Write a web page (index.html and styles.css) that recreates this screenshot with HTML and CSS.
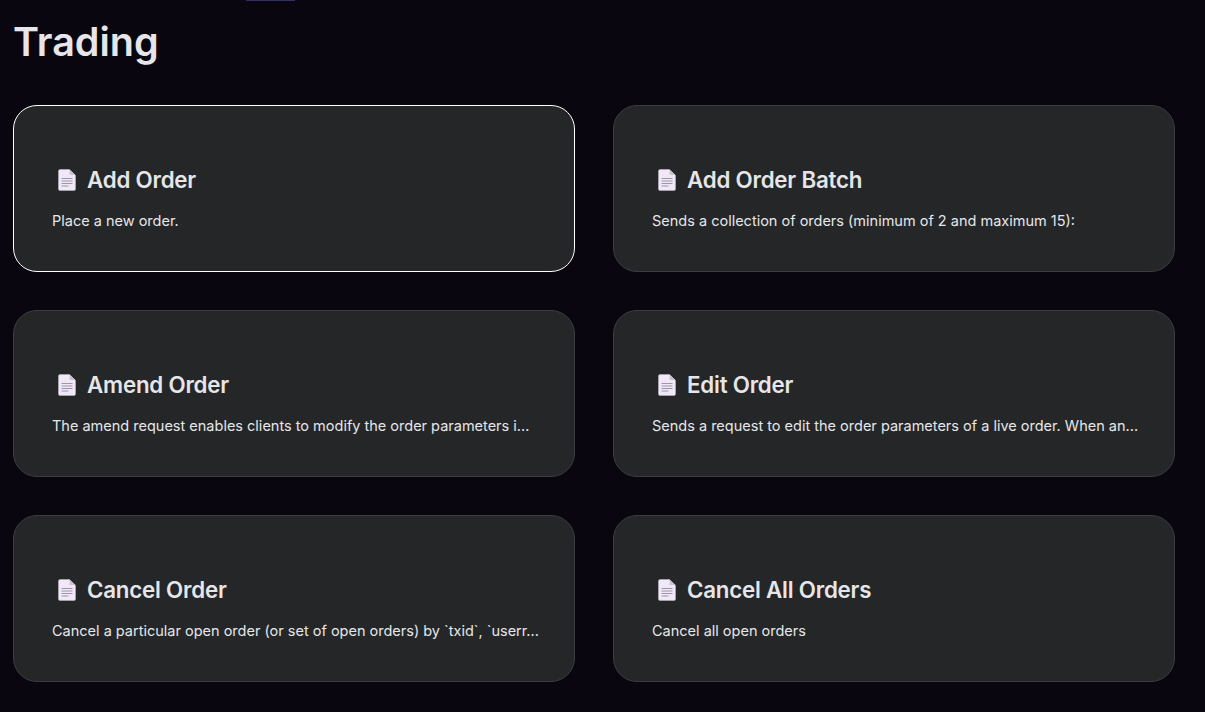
FILE: index.html
```html
<!DOCTYPE html>
<html lang="en">
<head>
<meta charset="utf-8">
<title>Trading</title>
<link rel="stylesheet" href="styles.css">
</head>
<body>
<svg class="sprite" aria-hidden="true">
  <symbol id="doc" viewBox="0 0 18 22">
    <path class="sheet" d="M2 .5h9.500L17.500 6.500V20a1.500 1.500 0 0 1-1.500 1.500H2A1.500 1.500 0 0 1 .5 20V2A1.500 1.500 0 0 1 2 .5z"/>
    <path class="fold" d="M11.500.5v4.500a1 1 0 0 0 1 1h5z"/>
    <path class="lines" d="M3.500 9.500h11M3.500 12h11M3.500 14.500h11M3.500 17h7"/>
  </symbol>
</svg>
<div class="top-pill"></div>
<main class="page">
  <h1 class="heading">Trading</h1>
  <section class="grid">
    <a class="card card-active">
      <h2 class="card-title"><svg class="doc"><use href="#doc"/></svg>Add Order</h2>
      <p class="card-text">Place a new order.</p>
    </a>
    <a class="card">
      <h2 class="card-title"><svg class="doc"><use href="#doc"/></svg>Add Order Batch</h2>
      <p class="card-text">Sends a collection of orders (minimum of 2 and maximum 15):</p>
    </a>
    <a class="card">
      <h2 class="card-title"><svg class="doc"><use href="#doc"/></svg>Amend Order</h2>
      <p class="card-text">The amend request enables clients to modify the order parameters i...</p>
    </a>
    <a class="card">
      <h2 class="card-title"><svg class="doc"><use href="#doc"/></svg>Edit Order</h2>
      <p class="card-text">Sends a request to edit the order parameters of a live order. When an...</p>
    </a>
    <a class="card">
      <h2 class="card-title"><svg class="doc"><use href="#doc"/></svg>Cancel Order</h2>
      <p class="card-text">Cancel a particular open order (or set of open orders) by `txid`, `userr...</p>
    </a>
    <a class="card">
      <h2 class="card-title"><svg class="doc"><use href="#doc"/></svg>Cancel All Orders</h2>
      <p class="card-text">Cancel all open orders</p>
    </a>
  </section>
</main>
</body>
</html>
```
FILE: styles.css
```css
* { box-sizing: border-box; }
html, body { margin: 0; height: 100%; }
body {
  background: #0a0610;
  color: #e6e6ea;
  font-family: Inter, "Liberation Sans", sans-serif;
  overflow: hidden;
}
.sprite { display: none; }
.top-pill {
  position: absolute;
  left: 246px;
  top: 0;
  width: 49px;
  height: 1px;
  background: #2f2f6b;
}
.page { padding: 15px 30px 0 13px; }
.heading {
  margin: 0;
  font-size: 39.5px;
  line-height: 54px;
  font-weight: 600;
  color: #e6e6ea;
}
.grid {
  display: grid;
  grid-template-columns: 562px 562px;
  grid-auto-rows: 167px;
  gap: 38px;
  margin-top: 36px;
}
.card {
  display: block;
  background: #242628;
  border: 1px solid #3b3d42;
  border-radius: 24px;
  padding: 60px 38px 0;
  min-width: 0;
}
.card-active { border-color: #ffffff; }
.card-title {
  display: flex;
  align-items: center;
  margin: 0;
  padding-left: 6px;
  font-size: 22.3px;
  line-height: 28px;
  font-weight: 600;
  letter-spacing: -0.2px;
  color: #e6e6ea;
}
.doc {
  width: 18px;
  height: 22px;
  margin-right: 11px;
  flex: none;
}
.sheet { fill: #f0e8f6; stroke: #b9b3c0; stroke-width: .6; }
.fold { fill: #c9c3d0; }
.lines { stroke: #9c96a6; stroke-width: 1; fill: none; }
.card-text {
  margin: 17px 0 0;
  font-size: 14.5px;
  line-height: 20px;
  color: #e6e6ea;
  white-space: nowrap;
}
```
